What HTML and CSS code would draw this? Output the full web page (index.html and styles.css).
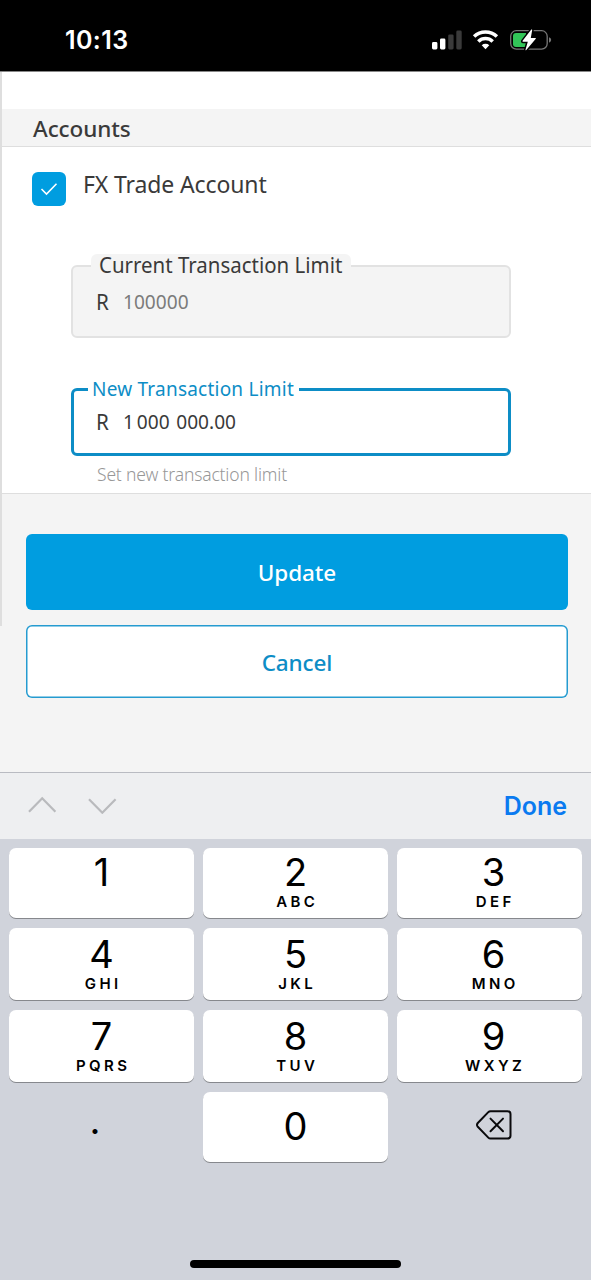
FILE: index.html
```html
<!DOCTYPE html>
<html lang="en">
<head>
<meta charset="utf-8">
<title>Transaction limits</title>
<link rel="stylesheet" href="styles.css">
</head>
<body>
<div class="screen">
  <header class="status">
    <span class="clock">10:13</span>
    <svg class="status-icons" width="120" height="24" viewBox="0 0 120 24">
      <rect x="0" y="13" width="5.4" height="7.4" rx="1.4" fill="#fff"/>
      <rect x="8" y="9.6" width="5.4" height="10.8" rx="1.4" fill="#fff"/>
      <rect x="16.200" y="5.400" width="5.400" height="15" rx="1.400" fill="#3a3a3a"/>
      <rect x="24.300" y="1.600" width="5.400" height="18.800" rx="1.400" fill="#3a3a3a"/>
      <g fill="none" stroke="#fff" stroke-width="3.500">
        <path d="M42.100 7.500a16.400 16.400 0 0 1 22.800 0"/>
        <path d="M46.300 12.400a10.300 10.300 0 0 1 14.400 0"/>
      </g>
      <path d="M49.700 16.300a5.600 5.600 0 0 1 7.600 0l-3.800 4z" fill="#fff"/>
      <rect x="78.700" y="1.700" width="36.500" height="18.400" rx="5.600" fill="none" stroke="#777" stroke-width="1.300"/>
      <path d="M117 8.300q2.200.8 2.200 2.700t-2.200 2.700z" fill="#777"/>
      <path d="M84 4h10v14H84q-3 0-3-3V7q0-3 3-3z" fill="#32c558"/>
      <path d="M99.300.6L90.600 11.800q-.5.900.5.900h4.700l-2.300 8q0 1 .8.200L103.800 9.800q.5-.9-.5-.9h-4.500l1.400-7.800q0-1-.9-.5z" fill="#fff" stroke="#000" stroke-width="3" paint-order="stroke" stroke-linejoin="round"/>
    </svg>
  </header>

  <main class="app">
    <div class="spacer"></div>
    <h2 class="section-title">Accounts</h2>
    <section class="account">
      <div class="account-row">
        <span class="checkbox">
          <svg width="18" height="14" viewBox="0 0 18 14"><path d="M1.500 7l5 5L16.500 1.700" fill="none" stroke="#fff" stroke-width="1.600"/></svg>
        </span>
        <span class="account-name">FX Trade Account</span>
      </div>
      <div class="field field-readonly">
        <span class="label"><span class="label-text">Current Transaction Limit</span></span>
        <span class="currency">R</span><span class="value">100000</span>
      </div>
      <div class="field field-active">
        <span class="label">New Transaction Limit</span>
        <span class="currency">R</span><span class="value">1<i class="thin"></i>000<i class="space"></i>000.00</span>
      </div>
      <p class="hint">Set new transaction limit</p>
    </section>
    <div class="actions">
      <div class="btn btn-primary">Update</div>
      <div class="btn btn-outline">Cancel</div>
    </div>
  </main>

  <div class="toolbar">
    <svg class="arrows" width="90" height="18" viewBox="0 0 90 18"><path d="M1 15.800L14.200 2.300 27.400 15.800M61 3.200L74.300 16.700 87.600 3.200" fill="none" stroke="#b9babd" stroke-width="2.200"/></svg>
    <span class="done">Done</span>
  </div>
  <div class="keyboard">
    <div class="key"><b>1</b></div>
    <div class="key"><b>2</b><small>ABC</small></div>
    <div class="key"><b>3</b><small>DEF</small></div>
    <div class="key"><b>4</b><small>GHI</small></div>
    <div class="key"><b>5</b><small>JKL</small></div>
    <div class="key"><b>6</b><small>MNO</small></div>
    <div class="key"><b>7</b><small>PQRS</small></div>
    <div class="key"><b>8</b><small>TUV</small></div>
    <div class="key"><b>9</b><small>WXYZ</small></div>
    <div class="key key-plain key-dot"><b>.</b></div>
    <div class="key key-zero"><b>0</b></div>
    <div class="key key-plain key-delete">
      <svg width="36" height="30" viewBox="0 0 36 30" fill="none" stroke="#0a0a0c" stroke-width="2" stroke-linejoin="round">
        <path d="M14.500 1.200H31.500q3 0 3 3V25.500q0 3-3 3H14.500q-1.300 0-2.200-.9L1.800 16.800q-1.600-1.900 0-3.800L12.300 2.100q.9-.9 2.200-.9z"/>
        <path d="M14.500 8.600L27 21.200M27 8.600L14.500 21.200" stroke-linecap="round"/>
      </svg>
    </div>
  </div>
  <div class="home"><span class="home-bar"></span></div>
</div>
</body>
</html>
```
FILE: styles.css
```css
* { box-sizing: border-box; }
body { margin: 0; font-family: "Noto Sans", sans-serif; color: #3a3a3a; }
.screen { width: 591px; height: 1280px; display: flex; flex-direction: column; overflow: hidden; background: #d0d3db; }
.status { height: 72px; background: #000; border-bottom: 1px solid #888; display: flex; justify-content: space-between; align-items: flex-start; padding: 24px 39px 0 65px; }
.clock { font: 600 25px/32px Inter, sans-serif; color: #fff; letter-spacing: 0.4px; }
.status-icons { margin-top: 5px; }

.app { position: relative; height: 700px; background: #f4f4f4; display: flex; flex-direction: column; }
.app::before { content: ""; position: absolute; left: 0; top: 0; width: 2px; height: 554px; background: #dedede; }
.spacer { height: 37px; background: #fff; }
.section-title { margin: 0; height: 38px; padding-left: 33px; border-bottom: 1px solid #dedede; font-size: 22.5px; font-weight: 480; line-height: 39px; letter-spacing: -0.1px; }
.account { height: 347px; background: #fff; border-bottom: 1px solid #dedede; padding: 25px 0 0 32px; }
.account-row { display: flex; height: 34px; }
.checkbox { width: 34px; height: 34px; border-radius: 6px; background: #009de0; display: flex; align-items: center; justify-content: center; }
.account-name { margin-left: 17px; font-size: 23px; line-height: 25px; letter-spacing: -0.12px; }
.field { position: relative; margin-left: 39px; width: 440px; display: flex; border-radius: 6px; }
.field-readonly { margin-top: 59px; height: 73px; border: 2px solid #e2e2e2; background: #f4f4f4; padding: 19px 0 0 23px; }
.field-active { margin-top: 50px; height: 68px; border: 3px solid #0d8dc6; padding: 15px 0 0 22px; }
.currency { width: 27px; font-size: 22px; line-height: 30px; transform: scaleX(0.94); transform-origin: left; }
.value { font-size: 20px; line-height: 31px; transform: scaleX(0.955); transform-origin: left; }
.field-readonly .value { color: #7b7b7b; }
.thin { display: inline-block; width: 3px; }
.space { display: inline-block; width: 7px; }
.label { position: absolute; white-space: nowrap; }
.field-readonly .label { left: 18px; top: -13px; width: 260px; height: 24px; padding-left: 8px; background: #f4f4f4; border-radius: 6px; font-size: 22px; line-height: 20px; }
.label-text { display: inline-block; transform: scaleX(0.93); transform-origin: left; }
.field-active .label { left: 14px; top: -15px; width: 211px; height: 24px; padding-left: 4px; background: #fff; color: #0d8dc6; font-size: 19px; line-height: 26px; letter-spacing: 0.22px; }
.hint { margin: 6px 0 0 65px; font-size: 17.5px; line-height: 24px; font-weight: 330; letter-spacing: -0.17px; color: #979797; }
.actions { padding: 40px 23px 0 26px; display: grid; gap: 15px; }
.btn { height: 76px; border-radius: 6px; display: flex; align-items: center; justify-content: center; font-size: 22.5px; font-weight: 480; letter-spacing: -0.1px; }
.btn-primary { background: #009de0; color: #fff; }
.btn-outline { height: 73px; padding-top: 2px; background: #fff; box-shadow: inset 0 0 0 1.5px #259bd0; color: #0d8dc6; }

.toolbar { height: 67px; background: #eeeff1; border-top: 1px solid #b9bbc2; display: flex; align-items: center; justify-content: space-between; padding: 0 24px 0 28px; }
.arrows { margin-bottom: 2px; }
.done { font: 600 25px/32px Inter, sans-serif; color: #0a7af0; }
.keyboard { display: grid; grid-template-columns: repeat(3, 185px); grid-template-rows: 70px 72px 72px 70px; column-gap: 9px; row-gap: 10px; padding: 9px 0 0 9px; font-family: Inter, sans-serif; color: #000; }
.key { background: #fff; border-radius: 7px; box-shadow: 0 1px 0 #86888d; display: flex; flex-direction: column; align-items: center; padding-top: 4px; }
.key b { font-weight: 380; font-size: 38px; line-height: 40px; }
.key small { font-size: 15px; font-weight: 620; line-height: 20px; letter-spacing: 3.4px; margin-right: -3.4px; }
.key:nth-child(n+4) { padding-top: 6px; }
.key:nth-child(3n) { padding-left: 8px; }
.key-plain { background: none; box-shadow: none; }
.key.key-zero { padding-top: 14px; }
.key.key-dot { padding: 8px 13px 0 0; }
.key.key-delete { padding: 18px 0 0 8px; }
.home { flex: 1; display: flex; justify-content: center; align-items: flex-end; padding-bottom: 12px; }
.home-bar { width: 211px; height: 8px; border-radius: 4px; background: #000; }
```
